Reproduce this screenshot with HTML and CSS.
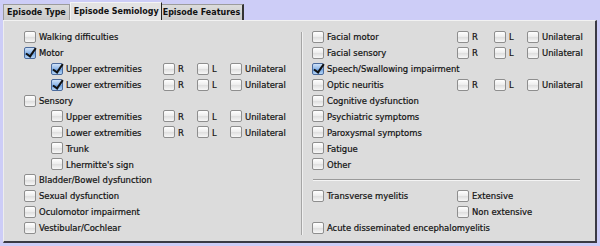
FILE: index.html
```html
<!DOCTYPE html>
<html lang="en">
<head>
    <meta charset="UTF-8">
    <title>Episode Semiology</title>
    <link rel="stylesheet" href="styles.css">
</head>
<body>
    <div class="window">
        <div class="tabs">
            <div class="tab">Episode Type</div>
            <div class="tab active">Episode Semiology</div>
            <div class="tab last">Episode Features</div>
        </div>

        <div class="panel">
            <div class="column left">
                <div class="row"><label class="check main"><span class="box"></span>Walking difficulties</label></div>
                <div class="row"><label class="check main"><span class="box on"></span>Motor</label></div>
                <div class="row sub">
                    <label class="check main"><span class="box on"></span>Upper extremities</label>
                    <label class="check side r"><span class="box"></span>R</label>
                    <label class="check side l"><span class="box"></span>L</label>
                    <label class="check side"><span class="box"></span>Unilateral</label>
                </div>
                <div class="row sub">
                    <label class="check main"><span class="box on"></span>Lower extremities</label>
                    <label class="check side r"><span class="box"></span>R</label>
                    <label class="check side l"><span class="box"></span>L</label>
                    <label class="check side"><span class="box"></span>Unilateral</label>
                </div>
                <div class="row"><label class="check main"><span class="box"></span>Sensory</label></div>
                <div class="row sub">
                    <label class="check main"><span class="box"></span>Upper extremities</label>
                    <label class="check side r"><span class="box"></span>R</label>
                    <label class="check side l"><span class="box"></span>L</label>
                    <label class="check side"><span class="box"></span>Unilateral</label>
                </div>
                <div class="row sub">
                    <label class="check main"><span class="box"></span>Lower extremities</label>
                    <label class="check side r"><span class="box"></span>R</label>
                    <label class="check side l"><span class="box"></span>L</label>
                    <label class="check side"><span class="box"></span>Unilateral</label>
                </div>
                <div class="row sub"><label class="check main"><span class="box"></span>Trunk</label></div>
                <div class="row sub"><label class="check main"><span class="box"></span>Lhermitte's sign</label></div>
                <div class="row"><label class="check main"><span class="box"></span>Bladder/Bowel dysfunction</label></div>
                <div class="row"><label class="check main"><span class="box"></span>Sexual dysfunction</label></div>
                <div class="row"><label class="check main"><span class="box"></span>Oculomotor impairment</label></div>
                <div class="row"><label class="check main"><span class="box"></span>Vestibular/Cochlear</label></div>
            </div>

            <div class="column right">
                <div class="row">
                    <label class="check main"><span class="box"></span>Facial motor</label>
                    <label class="check side r"><span class="box"></span>R</label>
                    <label class="check side l"><span class="box"></span>L</label>
                    <label class="check side"><span class="box"></span>Unilateral</label>
                </div>
                <div class="row">
                    <label class="check main"><span class="box"></span>Facial sensory</label>
                    <label class="check side r"><span class="box"></span>R</label>
                    <label class="check side l"><span class="box"></span>L</label>
                    <label class="check side"><span class="box"></span>Unilateral</label>
                </div>
                <div class="row"><label class="check main"><span class="box on"></span>Speech/Swallowing impairment</label></div>
                <div class="row">
                    <label class="check main"><span class="box"></span>Optic neuritis</label>
                    <label class="check side r"><span class="box"></span>R</label>
                    <label class="check side l"><span class="box"></span>L</label>
                    <label class="check side"><span class="box"></span>Unilateral</label>
                </div>
                <div class="row"><label class="check main"><span class="box"></span>Cognitive dysfunction</label></div>
                <div class="row"><label class="check main"><span class="box"></span>Psychiatric symptoms</label></div>
                <div class="row"><label class="check main"><span class="box"></span>Paroxysmal symptoms</label></div>
                <div class="row"><label class="check main"><span class="box"></span>Fatigue</label></div>
                <div class="row"><label class="check main"><span class="box"></span>Other</label></div>

                <div class="separator"></div>

                <div class="row">
                    <label class="check main"><span class="box"></span>Transverse myelitis</label>
                    <label class="check"><span class="box"></span>Extensive</label>
                </div>
                <div class="row">
                    <span class="main"></span>
                    <label class="check"><span class="box"></span>Non extensive</label>
                </div>
                <div class="row"><label class="check main"><span class="box"></span>Acute disseminated encephalomyelitis</label></div>
            </div>
        </div>
    </div>
</body>
</html>
```

FILE: styles.css
```css
body {
    margin: 0;
    background: #cdcdf7;
    font-family: 'DejaVu Sans Condensed', 'Liberation Sans', sans-serif;
    font-size: 9.4px;
    color: #111;
    -webkit-text-stroke: 0.2px #111;
}

.window {
    width: 600px;
    height: 246px;
    padding: 2px 3px 0 3px;
    box-sizing: border-box;
}

/* tabs */
.tabs {
    display: flex;
    align-items: flex-end;
    height: 18px;
}

.tab {
    height: 16px;
    line-height: 15px;
    padding: 0 3px 0 3px;
    font-size: 8.9px;
    font-weight: bold;
    background: linear-gradient(#dcdcdc, #c9c9c9);
    border: 1px solid #9c9c9c;
    border-bottom: none;
    box-sizing: border-box;
    -webkit-text-stroke: 0;
}

.tab.active {
    height: 18px;
    line-height: 17px;
    background: #e3e3e3;
    border-color: #f4f4f4;
    border-right: 1px solid #222;
    padding: 0 2px 0 3px;
}

.tab.last {
    border-left: none;
    border-right: 2px solid #333;
    padding: 0 2px 0 1px;
}

/* panel */
.panel {
    display: flex;
    height: 223px;
    background: #dcdcdc;
    border-top: 1px solid #f2f2f2;
    border-left: 1px solid #eeeeee;
    border-right: 2px solid #3a3a44;
    border-bottom: 2px solid #3a3a44;
    box-sizing: border-box;
}

.column {
    padding-top: 8px;
}

.column.left {
    width: 297px;
    padding-left: 20px;
    box-sizing: border-box;
}

.column.right {
    flex: 1;
    margin: 11px 0 6px 0;
    padding: 0 0 0 10px;
    border-left: 1px solid #a5a5a5;
    box-shadow: inset 1px 0 0 #f0f0f0;
}

.column.right .row:first-child {
    margin-top: -3px;
}

.row {
    display: flex;
    align-items: center;
    height: 15.9px;
}

.row.sub {
    padding-left: 27px;
}

.check {
    display: flex;
    align-items: center;
    white-space: nowrap;
}

.main {
    width: 139px;
    flex: none;
}

.row.sub .main {
    width: 112px;
}

.column.right .main {
    width: 145px;
}

.side {
    width: 33px;
    flex: none;
}

.side.r {
    width: 34px;
}

.column.right .side.r {
    width: 37px;
}

.column.right .side:last-child,
.column.left .side:last-child {
    width: auto;
}

/* aqua-like checkbox */
.box {
    position: relative;
    width: 12px;
    height: 12px;
    margin-right: 3px;
    flex: none;
    border: 1px solid #8e8e8e;
    border-radius: 2px;
    box-sizing: border-box;
    background: linear-gradient(#ffffff, #ececec 50%, #dedede 51%, #f7f7f7);
}

.box.on {
    border-color: #4a6a9c;
    background: linear-gradient(#cfe2f8, #8db6e8 50%, #6a9fdf 51%, #b6d6f8);
}

.box.on::after {
    content: "";
    position: absolute;
    left: 3px;
    top: -2px;
    width: 4px;
    height: 9px;
    border-right: 2px solid #111;
    border-bottom: 2px solid #111;
    transform: rotate(35deg);
}

.separator {
    height: 1px;
    margin: 7px 15px 8px 1px;
    background: #9a9a9a;
    box-shadow: 0 1px 0 #f4f4f4;
}
```
